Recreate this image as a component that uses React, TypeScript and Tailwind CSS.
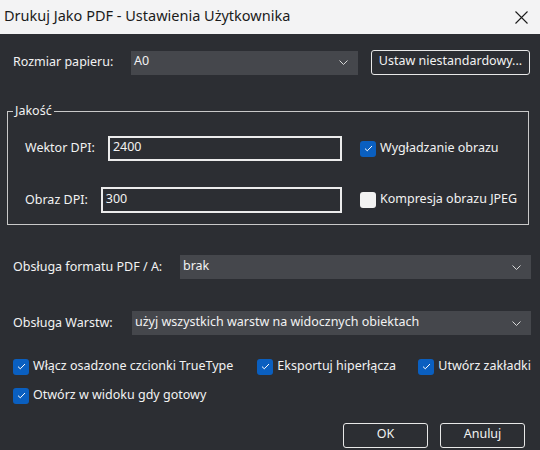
import React from "react";

const font = { fontFamily: '"Segoe UI", "Noto Sans", "Liberation Sans", sans-serif' };

function Chevron() {
  return (
    <svg width="9" height="5" viewBox="0 0 9 5" className="shrink-0">
      <path d="M0.5 0.5 L4.5 4.5 L8.5 0.5" fill="none" stroke="#d8d8d8" strokeWidth="1" />
    </svg>
  );
}

function Combo({ value, className }: { value: string; className: string }) {
  return (
    <div className={`flex h-[24px] items-center justify-between bg-[#45474c] pl-[3px] pr-[10px] text-[#f2f2f2] ${className}`}>
      <span className="-mt-[2px] whitespace-nowrap">{value}</span>
      <Chevron />
    </div>
  );
}

function Check({ checked, label }: { checked: boolean; label: string }) {
  return (
    <div className="flex items-center gap-[4px] whitespace-nowrap">
      {checked ? (
        <div className="flex h-[16px] w-[16px] shrink-0 items-center justify-center rounded-[3px] bg-[#0a5fc0]">
          <svg width="9" height="7" viewBox="0 0 9 7">
            <path d="M1 3.6 L3.3 5.8 L8 1" fill="none" stroke="#ffffff" strokeWidth="1" />
          </svg>
        </div>
      ) : (
        <div className="h-[16px] w-[16px] shrink-0 rounded-[3px] bg-[#f2f2f2]" />
      )}
      <span className="-mt-[1px] text-[#f2f2f2]">{label}</span>
    </div>
  );
}

export default function App() {
  return (
    <div className="flex h-[450px] w-[540px] flex-col overflow-hidden bg-[#2c2e33] text-[12.5px]" style={font}>
      <div className="flex h-[34px] shrink-0 items-center justify-between bg-[#f3f3f4] pl-[4px] pr-[12px]">
        <span className="-mt-[2px] text-[14.5px] text-[#1b1b1b]">Drukuj Jako PDF - Ustawienia Użytkownika</span>
        <svg width="13" height="13" viewBox="0 0 13 13">
          <path d="M0.5 0.5 L12.5 12.5 M12.5 0.5 L0.5 12.5" stroke="#1b1b1b" strokeWidth="1.1" />
        </svg>
      </div>

      <div className="flex flex-col pl-[7px] pr-[9px] text-[#f2f2f2]">
        <div className="mt-[16px] flex h-[25px] items-center pl-[6px]">
          <span className="w-[118px]">Rozmiar papieru:</span>
          <Combo value="A0" className="w-[227px]" />
          <div className="ml-[13px] flex h-[25px] w-[159px] items-center justify-center rounded-[3px] border border-[#e8e8e8] pb-[2px]">
            Ustaw niestandardowy...
          </div>
        </div>

        <fieldset className="mt-[27px] mr-[2px] border border-[#c9c9c9] px-0 pb-[11px]">
          <legend className="ml-[5px] px-[2px] leading-[18px]">Jakość</legend>
          <div className="mt-[16px] flex h-[25px] items-center pl-[17px]">
            <span>Wektor DPI:</span>
            <div className="ml-[13px] flex h-full flex-1 items-center border-2 border-[#ececec] pl-[3px] pb-[2px]">2400</div>
            <div className="ml-[18px] w-[168px]">
              <Check checked label="Wygładzanie obrazu" />
            </div>
          </div>
          <div className="mt-[26px] flex h-[26px] items-center pl-[17px]">
            <span>Obraz DPI:</span>
            <div className="ml-[13px] flex h-full flex-1 items-center border-2 border-[#ececec] pl-[3px] pb-[2px]">300</div>
            <div className="ml-[18px] w-[168px]">
              <Check checked={false} label="Kompresja obrazu JPEG" />
            </div>
          </div>
        </fieldset>

        <div className="mt-[30px] flex items-center pl-[6px]">
          <span className="w-[167px]">Obsługa formatu PDF / A:</span>
          <Combo value="brak" className="flex-1" />
        </div>

        <div className="mt-[32px] flex items-center pl-[6px]">
          <span className="w-[119px]">Obsługa Warstw:</span>
          <Combo value="użyj wszystkich warstw na widocznych obiektach" className="flex-1" />
        </div>

        <div className="mt-[23px] flex items-center pl-[6px]">
          <div className="w-[249px]">
            <Check checked label="Włącz osadzone czcionki TrueType" />
          </div>
          <div className="w-[164px]">
            <Check checked label="Eksportuj hiperłącza" />
          </div>
          <Check checked label="Utwórz zakładki" />
        </div>
        <div className="mt-[11px] flex items-center pl-[6px]">
          <Check checked label="Otwórz w widoku gdy gotowy" />
        </div>

        <div className="mt-[18px] flex justify-end gap-[12px] pr-[6px]">
          <div className="flex h-[25px] w-[85px] items-center justify-center rounded-[3px] border border-[#e8e8e8] pb-[2px]">OK</div>
          <div className="flex h-[25px] w-[85px] items-center justify-center rounded-[3px] border border-[#e8e8e8] pb-[2px]">Anuluj</div>
        </div>
      </div>
    </div>
  );
}
